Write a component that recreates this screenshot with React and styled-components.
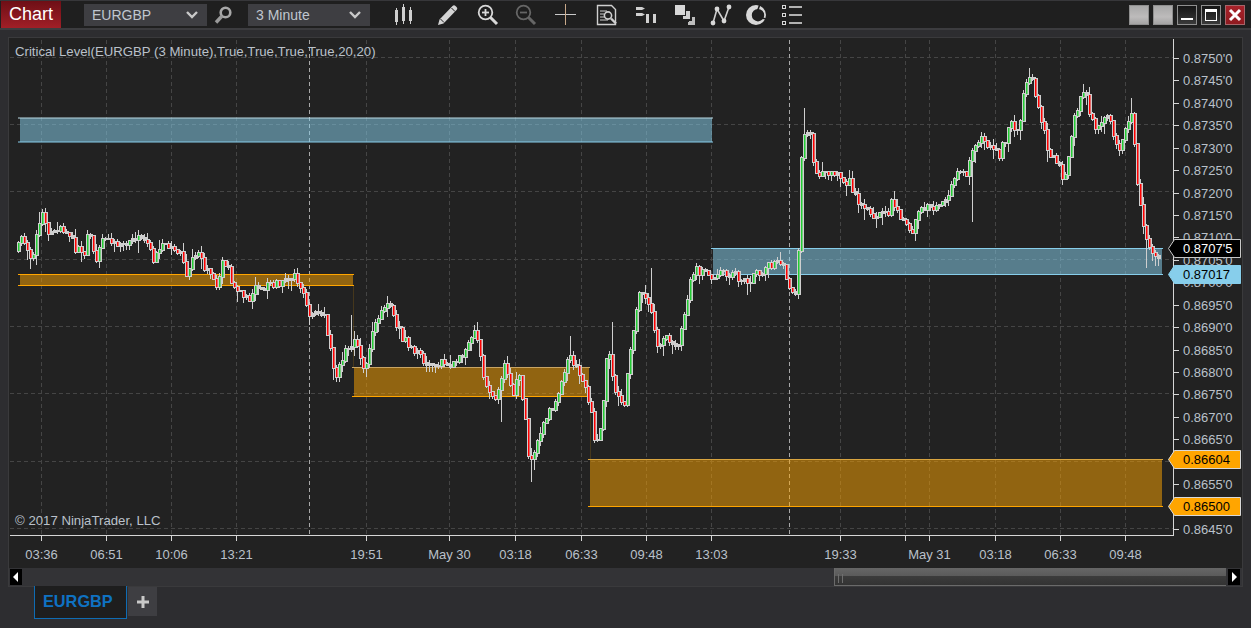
import React from 'react';
import styled, { createGlobalStyle } from 'styled-components';

const GlobalStyle = createGlobalStyle`
  html, body { margin: 0; padding: 0; background: #2d2d30; overflow: hidden; }
  body { font-family: "Liberation Sans", Arial, sans-serif; }
`;

const Shell = styled.div`
  width: 1251px;
  height: 628px;
  display: flex;
  flex-direction: column;
  background: #2d2d30;
  overflow: hidden;
`;

const Toolbar = styled.div`
  height: 27px;
  display: flex;
  align-items: center;
  background: #1f1f1f;
  border-top: 1px solid #37373a;
  border-bottom: 2px solid #3c3c3f;
`;

const ChartTab = styled.div`
  width: 60px;
  height: 27px;
  margin-left: 1px;
  background: linear-gradient(#6e0f16, #a11f27);
  color: #fff;
  font-size: 18px;
  line-height: 27px;
  text-align: center;
`;

const Dropdown = styled.div`
  width: ${({ $w }) => $w}px;
  height: 22px;
  margin-left: ${({ $ml }) => $ml}px;
  padding: 0 8px;
  box-sizing: border-box;
  display: flex;
  align-items: center;
  justify-content: space-between;
  background: #3e3e42;
  color: #c0c6cf;
  font-size: 14px;
`;

const ToolSlot = styled.div`
  width: ${({ $w }) => $w}px;
  height: 27px;
  flex: none;
  display: flex;
  align-items: center;
  justify-content: center;
`;

const WindowButtons = styled.div`
  margin-left: auto;
  margin-right: 6px;
  display: flex;
  gap: 4px;
`;

const WinButton = styled.div`
  width: 20px;
  height: 20px;
  box-sizing: border-box;
  border: 1px solid ${({ $kind }) => ($kind === 'close' ? '#a5656a' : '#8f8f8f')};
  display: flex;
  align-items: center;
  justify-content: center;
  background: ${({ $kind }) =>
    $kind === 'close'
      ? 'linear-gradient(#a8222a, #8f1a20)'
      : $kind === 'dark'
        ? 'linear-gradient(#151515, #3a3a3a)'
        : 'linear-gradient(#a8a8a8, #bdbbbb 60%, #a4a4a4)'};
`;

const Body = styled.div`
  flex: 1;
  display: flex;
  flex-direction: column;
  padding: 8px 9px 0;
`;

const ChartPanel = styled.div`
  width: 1233px;
  height: 548px;
  flex: none;
  display: flex;
  flex-direction: column;
  background: #222222;
  box-shadow: 0 0 0 1px #3a3a3c;
`;

const ChartSvg = styled.svg`
  display: block;
  width: 1233px;
  height: 530px;
  flex: none;
`;

const AxisText = styled.text`
  font-family: "Liberation Sans", Arial, sans-serif;
  font-size: 13px;
  fill: ${({ $color }) => $color || '#bac1ca'};
`;

const Caption = styled.text`
  font-family: "Liberation Sans", Arial, sans-serif;
  font-size: 13.2px;
  fill: #bac1ca;
`;

const ScrollBar = styled.div`
  height: 18px;
  display: flex;
  background: #333336;
`;

const ArrowButton = styled.div`
  width: 12px;
  height: 16px;
  margin: 1px 2px 0 1px;
  flex: none;
  background: #000;
  display: flex;
  align-items: center;
  justify-content: center;
`;

const ScrollSpace = styled.div`
  flex: 1;
  display: flex;
  justify-content: flex-end;
  padding-right: 1px;
`;

const Thumb = styled.div`
  width: 392px;
  height: 18px;
  box-sizing: border-box;
  display: flex;
  align-items: center;
  gap: 3px;
  padding: 4px 0 0 3px;
  border-left: 1px solid #6a6a6a;
  border-bottom: 1px solid #6a6a6a;
  background: linear-gradient(#666 0, #5a5a5a 50%, #3b3b3b 50%, #333 100%);
`;

const Grip = styled.span`
  width: 1px;
  height: 9px;
  background: #6e6e6e;
`;

const TabRow = styled.div`
  display: flex;
  padding-left: 25px;
`;

const InstrumentTab = styled.div`
  width: 93px;
  height: 33px;
  box-sizing: border-box;
  border: 1px solid #0f6cb3;
  border-top: none;
  background: #1e1e1e;
  color: #0f72c2;
  font-size: 16.3px;
  font-weight: bold;
  line-height: 31px;
  padding-left: 8px;
`;

const AddTab = styled.div`
  width: 29px;
  height: 29px;
  margin-top: 1px;
  margin-left: 1px;
  display: flex;
  align-items: center;
  justify-content: center;
  background: #3e3e42;
`;

// screenshot coordinates of the price path, candles get generated around it
const PATH = [
  [18, 250], [21, 238], [27, 238], [30, 262], [33, 258], [36, 240], [39, 220], [44, 216], [48, 232], [55, 232],
  [60, 222], [63, 226], [66, 235], [72, 235], [75, 248], [82, 252], [86, 256], [89, 228], [92, 232], [96, 260],
  [100, 245], [108, 236], [112, 243], [120, 240], [125, 245], [130, 238], [142, 236], [150, 245], [155, 260],
  [163, 242], [170, 250], [175, 248], [183, 258], [187, 272], [193, 258], [200, 253], [205, 265], [210, 275],
  [218, 283], [222, 264], [228, 260], [232, 280], [240, 290], [250, 298], [258, 284], [268, 286], [285, 282],
  [295, 277], [302, 290], [310, 312], [325, 318], [330, 345], [336, 378], [345, 350], [355, 338], [365, 368],
  [375, 320], [388, 300], [395, 320], [408, 345], [420, 356], [435, 364], [450, 362], [465, 355], [477, 330],
  [484, 378], [495, 398], [505, 366], [513, 395], [520, 372], [526, 420], [530, 462], [540, 435], [550, 412],
  [560, 392], [570, 355], [580, 372], [590, 400], [596, 445], [603, 420], [608, 340], [615, 390], [625, 402],
  [632, 340], [640, 290], [650, 300], [657, 345], [668, 335], [678, 345], [688, 295], [695, 268], [710, 275],
  [730, 272], [750, 280], [765, 268], [782, 260], [789, 285], [796, 293], [798, 260], [800, 235], [801, 170],
  [803, 145], [806, 122], [812, 140], [815, 165], [820, 178], [832, 169], [840, 172], [842, 185], [850, 182],
  [855, 195], [860, 200], [867, 210], [875, 215], [882, 205], [888, 215], [892, 198], [897, 210], [903, 218],
  [912, 232], [918, 212], [927, 205], [940, 205], [950, 190], [957, 168], [967, 172], [973, 150], [980, 136],
  [990, 145], [1000, 155], [1010, 126], [1020, 125], [1025, 88], [1032, 76], [1040, 110], [1050, 155],
  [1060, 165], [1065, 182], [1075, 115], [1085, 90], [1095, 130], [1108, 115], [1120, 150], [1132, 112],
  [1138, 180], [1143, 222], [1150, 245], [1160, 258],
];

const SPIKES = [
  [972, 222], [1132, 98], [530, 482], [805, 108], [1030, 68], [1084, 84], [571, 336], [501, 422], [350, 315],
  [611, 322], [650, 268], [794, 296], [1146, 268], [1156, 266], [40, 212], [190, 280],
];

const priceAt = (x) => {
  for (let i = 1; i < PATH.length; i++) {
    if (x <= PATH[i][0]) {
      const [x0, y0] = PATH[i - 1];
      const [x1, y1] = PATH[i];
      return y0 + ((y1 - y0) * (x - x0)) / (x1 - x0);
    }
  }
  return PATH[PATH.length - 1][1];
};

const buildCandles = () => {
  let seed = 417;
  const rnd = () => {
    seed = (seed * 16807) % 2147483647;
    return seed / 2147483647;
  };
  let wicks = '';
  let bodies = '';
  let red = '';
  let green = '';
  let prev = priceAt(18);
  for (let x = 18; x <= 1160; x += 3) {
    const close = priceAt(x + 1) + (rnd() - 0.5) * 9;
    const top = Math.round(Math.min(prev, close));
    const bot = Math.round(Math.max(prev, close)) + 2;
    let hi = top - Math.round(rnd() * rnd() * 10);
    let lo = bot + Math.round(rnd() * rnd() * 12);
    const spike = SPIKES.find(([sx]) => Math.abs(sx - x) < 2);
    if (spike) {
      if (spike[1] < top) hi = spike[1];
      else lo = spike[1];
    }
    wicks += `M${x + 0.5} ${hi}V${lo}`;
    bodies += `M${x - 1} ${top}h4V${bot}h-4z`;
    if (bot - top >= 5) {
      const seg = `M${x} ${top + 1}h1.500V${bot - 1}h-1.500z`;
      if (close < prev) green += seg;
      else red += seg;
    }
    prev = close;
  }
  return { wicks, bodies, red, green };
};

const candles = buildCandles();

const TIME_LABELS = [
  [41, '03:36'], [106, '06:51'], [171, '10:06'], [236, '13:21'], [366, '19:51'], [449, 'May 30'],
  [515, '03:18'], [581, '06:33'], [646, '09:48'], [711, '13:03'], [840, '19:33'], [929, 'May 31'],
  [995, '03:18'], [1060, '06:33'], [1125, '09:48'],
];
const EXTRA_TICKS = [905];
const SESSION_LINES = [309, 789];
const GRID_Y = [57, 124, 191, 259, 326, 393, 461, 528];

const PRICES = Array.from({ length: 22 }, (_, i) => {
  const value = 8750 - i * 5;
  return { y: 58 + i * 22.43, label: `0.${value}'0` };
});

const BLUE = '#87ceeb';
const ORANGE = '#ffa500';

const ZONES = [
  { x0: 18, x1: 713, y0: 118, y1: 142, color: BLUE, topLine: '#b9d9e4', opacity: 0.53 },
  { x0: 18, x1: 354, y0: 274.5, y1: 285.5, color: ORANGE, opacity: 0.5 },
  { x0: 352, x1: 590, y0: 367.5, y1: 396.5, color: ORANGE, topLine: '#c9a564', opacity: 0.5 },
  { x0: 588, x1: 1163, y0: 459.5, y1: 506.5, color: ORANGE, topLine: '#d9a540', opacity: 0.5 },
  { x0: 711, x1: 1163, y0: 248.5, y1: 274.5, color: BLUE, opacity: 0.53 },
];

const BADGES = [
  { y: 239, label: "0.8707'5", fill: '#000', text: '#fff', edge: '#c8c8c8' },
  { y: 265, label: '0.87017', fill: BLUE, text: '#000', edge: BLUE },
  { y: 450, label: '0.86604', fill: ORANGE, text: '#000', edge: '#d8d8d8' },
  { y: 497, label: '0.86500', fill: ORANGE, text: '#000', edge: '#d8d8d8' },
];

function Zone({ x0, x1, y0, y1, color, topLine, opacity }) {
  return (
    <g>
      <rect x={x0 + 2} y={y0} width={x1 - x0 - 3} height={y1 - y0} fill={color} opacity={opacity} />
      <line x1={x0} x2={x1} y1={y0} y2={y0} stroke={topLine || color} strokeWidth="1.2" />
      <line x1={x0} x2={x1} y1={y1} y2={y1} stroke={color} strokeWidth="1.2" />
    </g>
  );
}

function Chart() {
  const ticks = [...TIME_LABELS.map((t) => t[0]), ...EXTRA_TICKS];
  return (
    <ChartSvg viewBox="9 38 1233 530">
      {GRID_Y.map((y) => (
        <line key={y} x1="10" x2="1174" y1={y + 0.5} y2={y + 0.5} stroke="#454545" strokeDasharray="4 3" />
      ))}
      {ticks.map((x) => (
        <line key={x} x1={x + 0.5} x2={x + 0.5} y1="40" y2="535" stroke="#454545" strokeDasharray="4 3" />
      ))}
      {SESSION_LINES.map((x) => (
        <line key={x} x1={x + 0.5} x2={x + 0.5} y1="40" y2="534" stroke="#a8a8a8" strokeDasharray="4 3" />
      ))}

      <g stroke="#ffa500" strokeOpacity="0.16">
        <line x1="353.5" x2="353.5" y1="286" y2="367" />
        <line x1="590.5" x2="590.5" y1="397" y2="459" />
      </g>
      {ZONES.map((z) => (
        <Zone key={z.x0} {...z} />
      ))}

      <path d={candles.wicks} stroke="#cfcfcf" fill="none" />
      <path d={candles.bodies} fill="#cfcfcf" />
      <path d={candles.red} fill="#ff0000" />
      <path d={candles.green} fill="#22cc33" />

      <line x1="10" x2="1174" y1="535.5" y2="535.5" stroke="#d6d6d6" />
      <line x1="1173.5" x2="1173.5" y1="39" y2="536" stroke="#d6d6d6" />
      {ticks.map((x) => (
        <line key={x} x1={x + 0.5} x2={x + 0.5} y1="535" y2="541" stroke="#d6d6d6" />
      ))}
      {TIME_LABELS.map(([x, label]) => (
        <AxisText key={x} x={x + 0.5} y="559" textAnchor="middle">{label}</AxisText>
      ))}

      {PRICES.map(({ y, label }) => (
        <g key={label}>
          <line x1="1174" x2="1179" y1={Math.round(y) + 0.5} y2={Math.round(y) + 0.5} stroke="#d6d6d6" />
          <AxisText x="1183" y={Math.round(y) + 5}>{label}</AxisText>
        </g>
      ))}

      {BADGES.map(({ y, label, fill, text, edge }) => (
        <g key={label}>
          <polygon
            points={`1168.5,${y + 9.5} 1174.5,${y + 0.5} 1240.5,${y + 0.5} 1240.5,${y + 18.5} 1174.5,${y + 18.5}`}
            fill={fill}
            stroke={edge}
          />
          <AxisText x="1183" y={y + 14} $color={text}>{label}</AxisText>
        </g>
      ))}

      <Caption x="15" y="55.5">Critical Level(EURGBP (3 Minute),True,True,True,True,20,20)</Caption>
      <Caption x="15" y="525">© 2017 NinjaTrader, LLC</Caption>
    </ChartSvg>
  );
}

const Chevron = () => (
  <svg width="14" height="10" viewBox="0 0 14 10">
    <polyline points="2,2 7,7 12,2" fill="none" stroke="#c9c9c9" strokeWidth="2.4" />
  </svg>
);

const SearchIcon = () => (
  <svg width="20" height="20" viewBox="0 0 20 20">
    <circle cx="12.5" cy="7.5" r="4.8" fill="none" stroke="#a8a8a8" strokeWidth="2.6" />
    <line x1="9" y1="11" x2="3" y2="17.5" stroke="#9a9a9a" strokeWidth="3.4" />
  </svg>
);

const CandleIcon = () => (
  <svg width="20" height="22" viewBox="0 0 20 22" fill="#cfcfcf">
    <rect x="1" y="6" width="3" height="12" />
    <rect x="2" y="4" width="1" height="17" />
    <rect x="8" y="3" width="3" height="14" />
    <rect x="9" y="0" width="1" height="20" />
    <rect x="15" y="6" width="3" height="11" />
    <rect x="16" y="3" width="1" height="17" />
  </svg>
);

const PencilIcon = () => (
  <svg width="22" height="22" viewBox="0 0 22 22">
    <path d="M1 21l1.5-5.5L15.5 2c1-1 2-1 3 0l1 1c1 1 1 2 0 3L6.5 19.5z" fill="#d4d4d4" />
    <path d="M3.5 15l3.5 3.5M14.5 4l3.5 3.5" stroke="#1f1f1f" strokeWidth="1" />
  </svg>
);

const ZoomIcon = ({ color, plus }) => (
  <svg width="22" height="22" viewBox="0 0 22 22">
    <circle cx="8.5" cy="8.5" r="6.8" fill="none" stroke={color} strokeWidth="1.8" />
    <line x1="13.5" y1="13.5" x2="20" y2="20" stroke={color} strokeWidth="3" />
    <line x1="5" y1="8.5" x2="12" y2="8.5" stroke={color} strokeWidth="1.8" />
    {plus && <line x1="8.5" y1="5" x2="8.5" y2="12" stroke={color} strokeWidth="1.8" />}
  </svg>
);

const CrossIcon = () => (
  <svg width="21" height="21" viewBox="0 0 21 21">
    <line x1="0" y1="10.5" x2="21" y2="10.5" stroke="#c9c9c9" />
    <line x1="10.5" y1="0" x2="10.5" y2="21" stroke="#c9a98a" />
  </svg>
);

const DataBoxIcon = () => (
  <svg width="22" height="22" viewBox="0 0 22 22" fill="none" stroke="#cfcfcf">
    <path d="M1.5 1.5h14l4 4V20.5H1.5z" strokeWidth="1.4" />
    <path d="M4 7h7M4 10h4M4 13h4M4 16h8" />
    <circle cx="12" cy="11.5" r="3.6" strokeWidth="1.6" />
    <line x1="15" y1="14.5" x2="20" y2="19.5" strokeWidth="2.4" />
  </svg>
);

const OrderIcon = () => (
  <svg width="22" height="18" viewBox="0 0 22 18" fill="#d0d0d0">
    <path d="M0 1h6l3 1.5L6 4H0zM0 7h6l3 1.5L6 10H0z" />
    <rect x="10" y="8" width="3" height="9" />
    <rect x="17" y="8" width="3" height="9" />
  </svg>
);

const LayerIcon = () => (
  <svg width="22" height="22" viewBox="0 0 22 22">
    <rect x="1" y="1" width="10" height="10" fill="#d8d8d8" />
    <path d="M12 7h4v8h-7v-3h3z" fill="#d0d0d0" />
    <path d="M18 13v4h-3v1h-1v3h7v-8z" fill="#bdbdbd" />
  </svg>
);

const NodesIcon = () => (
  <svg width="22" height="22" viewBox="0 0 22 22">
    <path d="M3 19L7 5l7 12 5-14" fill="none" stroke="#cfcfcf" strokeWidth="1.6" />
    <g fill="#d8d8d8">
      <circle cx="3" cy="19" r="2.4" />
      <circle cx="7" cy="5" r="2.4" />
      <circle cx="14" cy="17" r="2.4" />
      <circle cx="19" cy="3" r="2.4" />
    </g>
  </svg>
);

const ReloadIcon = () => (
  <svg width="22" height="22" viewBox="0 0 22 22">
    <path
      fillRule="evenodd"
      d="M11 1a10 10 0 1 0 0 20a10 10 0 1 0 0-20zM13 5a6.2 6.2 0 1 1 0 12.400a6.2 6.2 0 1 1 0-12.400z"
      fill="#d8d8d8"
    />
    <path d="M15 0l-2.500 7M21 15l-6-1.500" stroke="#1f1f1f" strokeWidth="1.6" />
  </svg>
);

const ListIcon = () => (
  <svg width="22" height="22" viewBox="0 0 22 22" stroke="#d8d8d8">
    {[3, 11, 19].map((y) => (
      <g key={y}>
        <rect x="1.5" y={y - 1.5} width="3" height="3" fill="none" />
        <line x1="8" x2="21" y1={y} y2={y} strokeWidth="1.6" />
      </g>
    ))}
  </svg>
);

const TOOLS = [
  [47, <CandleIcon />],
  [42, <PencilIcon />],
  [37, <ZoomIcon color="#d8d8d8" plus />],
  [39, <ZoomIcon color="#666" />],
  [41, <CrossIcon />],
  [41, <DataBoxIcon />],
  [40, <OrderIcon />],
  [36, <LayerIcon />],
  [35, <NodesIcon />],
  [36, <ReloadIcon />],
  [36, <ListIcon />],
];

export default function App() {
  return (
    <>
      <GlobalStyle />
      <Shell>
        <Toolbar>
          <ChartTab>Chart</ChartTab>
          <Dropdown $w={123} $ml={23}>EURGBP<Chevron /></Dropdown>
          <ToolSlot $w={32}><SearchIcon /></ToolSlot>
          <Dropdown $w={122} $ml={9}>3 Minute<Chevron /></Dropdown>
          <ToolSlot $w={10} />
          {TOOLS.map(([w, icon], i) => (
            <ToolSlot key={i} $w={w}>{icon}</ToolSlot>
          ))}
          <WindowButtons>
            <WinButton />
            <WinButton />
            <WinButton $kind="dark">
              <svg width="14" height="14" viewBox="0 0 14 14"><rect x="1" y="10" width="12" height="2" fill="#fff" /></svg>
            </WinButton>
            <WinButton $kind="dark">
              <svg width="14" height="14" viewBox="0 0 14 14" fill="none" stroke="#fff"><rect x="1.5" y="1.5" width="11" height="11" /><line x1="1" x2="13" y1="3" y2="3" strokeWidth="2" /></svg>
            </WinButton>
            <WinButton $kind="close">
              <svg width="14" height="14" viewBox="0 0 14 14"><path d="M2 2l10 10M12 2L2 12" stroke="#fff" strokeWidth="3" /></svg>
            </WinButton>
          </WindowButtons>
        </Toolbar>
        <Body>
          <ChartPanel>
            <Chart />
            <ScrollBar>
              <ArrowButton>
                <svg width="6" height="10" viewBox="0 0 6 10"><polygon points="5,0 5,10 0,5" fill="#fff" /></svg>
              </ArrowButton>
              <ScrollSpace>
                <Thumb><Grip /><Grip /></Thumb>
              </ScrollSpace>
              <ArrowButton>
                <svg width="6" height="10" viewBox="0 0 6 10"><polygon points="1,0 1,10 6,5" fill="#fff" /></svg>
              </ArrowButton>
            </ScrollBar>
          </ChartPanel>
          <TabRow>
            <InstrumentTab>EURGBP</InstrumentTab>
            <AddTab>
              <svg width="14" height="14" viewBox="0 0 14 14"><path d="M7 1v12M1 7h12" stroke="#c8c8c8" strokeWidth="3" /></svg>
            </AddTab>
          </TabRow>
        </Body>
      </Shell>
    </>
  );
}
